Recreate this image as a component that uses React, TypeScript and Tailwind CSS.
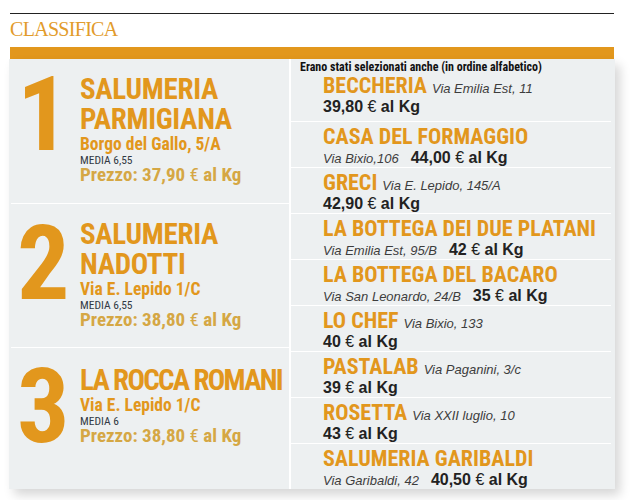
import React from "react";

const COND = "font-['Roboto_Condensed','Roboto',sans-serif]";
const SANS = "font-['Liberation_Sans',Arial,sans-serif]";

type Top = {
  n: string;
  lines: string[];
  track: string;
  addr: string;
  media: string;
  price: string;
  h: string;
  pt: string;
  numTop: string;
};

const tops: Top[] = [
  { n: "1", lines: ["SALUMERIA", "PARMIGIANA"], track: "tracking-[-0.3px]", addr: "Borgo del Gallo, 5/A", media: "MEDIA 6,55", price: "37,90", h: "h-[144px]", pt: "pt-[15px]", numTop: "mt-[4px]" },
  { n: "2", lines: ["SALUMERIA", "NADOTTI"], track: "tracking-[-0.3px]", addr: "Via E. Lepido 1/C", media: "MEDIA 6,55", price: "38,80", h: "h-[144px]", pt: "pt-[15px]", numTop: "mt-[8px]" },
  { n: "3", lines: ["LA ROCCA ROMANI"], track: "tracking-[-1.7px]", addr: "Via E. Lepido 1/C", media: "MEDIA 6", price: "38,80", h: "h-[142px]", pt: "pt-[17px]", numTop: "mt-[7px]" },
];

type Row = { name: string; addr: string; price: string; inline: boolean };

const rows: Row[] = [
  { name: "BECCHERIA", addr: "Via Emilia Est, 11", price: "39,80", inline: true },
  { name: "CASA DEL FORMAGGIO", addr: "Via Bixio,106", price: "44,00", inline: false },
  { name: "GRECI", addr: "Via E. Lepido, 145/A", price: "42,90", inline: true },
  { name: "LA BOTTEGA DEI DUE PLATANI", addr: "Via Emilia Est, 95/B", price: "42", inline: false },
  { name: "LA BOTTEGA DEL BACARO", addr: "Via San Leonardo, 24/B", price: "35", inline: false },
  { name: "LO CHEF", addr: "Via Bixio, 133", price: "40", inline: true },
  { name: "PASTALAB", addr: "Via Paganini, 3/c", price: "39", inline: true },
  { name: "ROSETTA", addr: "Via XXII luglio, 10", price: "43", inline: true },
  { name: "SALUMERIA GARIBALDI", addr: "Via Garibaldi, 42", price: "40,50", inline: false },
];

function Price({ v }: { v: string }) {
  return (
    <span className={`${SANS} font-bold text-[16px] leading-[17px] text-[#222] whitespace-nowrap`}>
      {v} <span className="font-normal">€</span> al Kg
    </span>
  );
}

export default function App() {
  return (
    <div className="w-[631px] h-[500px] bg-white overflow-hidden">
      <div className="ml-[10px] mt-[13px] w-[604px] h-px bg-[#222]" />
      <div className="ml-[10px] mt-[6px] h-[19px] leading-[19px] text-[20px] tracking-[-0.7px] text-[#e29b2b] font-['Liberation_Serif','Times_New_Roman',serif]">
        CLASSIFICA
      </div>
      <div className="ml-[9px] mt-[8px] w-[606px]">
        <div className="mx-[1px] h-[12px] bg-[#e2971d]" />
        <div className="flex bg-[#edf0f1] shadow-[5px_6px_10px_rgba(0,0,0,0.16)]">
          {/* left */}
          <div className="w-[280px] shrink-0 flex flex-col">
            {tops.map((t, i) => (
              <div key={i} className={`${t.h} flex flex-col`}>
                {i > 0 && <div className="ml-[2px] h-px bg-white" />}
                <div className="flex items-start">
                  <div className={`w-[71px] shrink-0 pl-[8px] ${t.numTop} ${COND} font-bold text-[104px] leading-[104px] text-[#e2971d]`}>
                    {t.n}
                  </div>
                  <div className={`flex flex-col ${t.pt}`}>
                    {t.lines.map((l) => (
                      <div key={l} className={`${COND} font-bold text-[29px] leading-[30px] ${t.track} text-[#e2971d] whitespace-nowrap`}>
                        {l}
                      </div>
                    ))}
                    <div className={`mt-px ${COND} font-bold text-[17.5px] leading-[18px] text-[#e2971d] whitespace-nowrap`}>{t.addr}</div>
                    <div className={`mt-px ${COND} text-[11.5px] leading-[12px] text-[#333a44]`}>{t.media}</div>
                    <div className={`${COND} font-bold text-[19px] leading-[18px] text-[#d5a744] whitespace-nowrap`}>
                      Prezzo: {t.price} <span className="font-normal">€</span> al Kg
                    </div>
                  </div>
                </div>
              </div>
            ))}
          </div>
          <div className="w-[2px] shrink-0 bg-white" />
          {/* right */}
          <div className="w-[324px] shrink-0 flex flex-col">
            <div className={`h-[12px] pt-[2px] pl-[9px] ${COND} font-bold text-[12px] leading-[12px] text-[#111] whitespace-nowrap`}>
              Erano stati selezionati anche (in ordine alfabetico)
            </div>
            {rows.map((r, i) => (
              <div key={r.name} className={`${i === 0 ? "h-[50px]" : "h-[46px]"} flex flex-col`}>
                {i > 0 && <div className="mr-[4px] h-px bg-white" />}
                <div className="pl-[32px] pt-[4px] leading-none">
                  <div className="flex items-baseline h-[22px]">
                    <span className={`${COND} font-bold text-[22px] leading-[22px] text-[#e2971d] whitespace-nowrap`}>{r.name}</span>
                    {r.inline && (
                      <span className={`ml-[5px] ${SANS} italic text-[13px] leading-[16px] text-[#3d3d3d] whitespace-nowrap`}>{r.addr}</span>
                    )}
                  </div>
                  <div className="mt-px flex items-baseline h-[17px]">
                    {!r.inline && (
                      <span className={`mr-[12px] ${SANS} italic text-[13px] leading-[16px] text-[#3d3d3d] whitespace-nowrap`}>{r.addr}</span>
                    )}
                    <Price v={r.price} />
                  </div>
                </div>
              </div>
            ))}
          </div>
        </div>
      </div>
    </div>
  );
}
